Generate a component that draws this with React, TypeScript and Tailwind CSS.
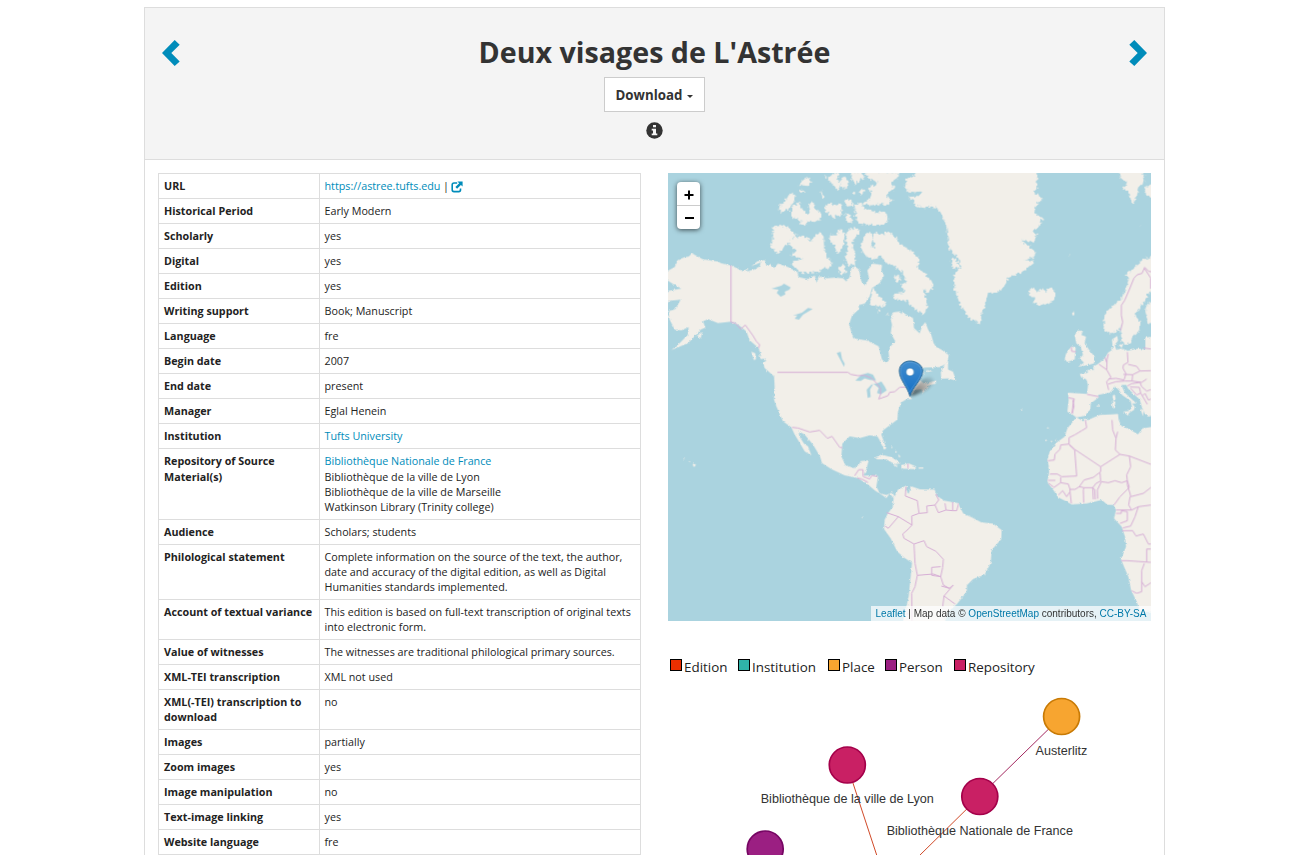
import React from "react";

type Row = { label: React.ReactNode; value: React.ReactNode; size?: string };

function Anchor({ children }: { children: React.ReactNode }) {
  return <a className="text-[#008cba]">{children}</a>;
}

const rows: Row[] = [
  {
    label: "URL",
    value: (
      <span className="flex items-center">
        <Anchor>https://astree.tufts.edu</Anchor>
        <span className="ml-[2.5px]">|</span>
        <svg className="ml-[2.5px] h-[12px] w-[12px]" viewBox="0 0 12 12" fill="none">
          <path d="M6.2 2H3Q1.2 2 1.2 3.8v5Q1.2 10.6 3 10.6h4.8q1.7 0 1.7-1.8V7.4" stroke="#008cba" strokeWidth="1.6" />
          <path d="M6.4 0.4h5.2v5.2L9.9 3.9 6.1 7.7 4.4 6 8.2 2.2z" fill="#008cba" />
        </svg>
      </span>
    ),
  },
  { label: "Historical Period", value: "Early Modern" },
  { label: "Scholarly", value: "yes" },
  { label: "Digital", value: "yes" },
  { label: "Edition", value: "yes" },
  { label: "Writing support", value: "Book; Manuscript" },
  { label: "Language", value: "fre" },
  { label: "Begin date", value: "2007" },
  { label: "End date", value: "present" },
  { label: "Manager", value: "Eglal Henein" },
  { label: "Institution", value: <Anchor>Tufts University</Anchor> },
  {
    label: (
      <>
        <div className="h-[16px]">Repository of Source</div>
        <div>Material(s)</div>
      </>
    ),
    value: (
      <>
        <div className="h-[16px]"><Anchor>Bibliothèque Nationale de France</Anchor></div>
        <div>Bibliothèque de la ville de Lyon</div>
        <div>Bibliothèque de la ville de Marseille</div>
        <div>Watkinson Library (Trinity college)</div>
      </>
    ),
    size: "h-[71px]",
  },
  { label: "Audience", value: "Scholars; students" },
  {
    label: "Philological statement",
    value:
      "Complete information on the source of the text, the author, date and accuracy of the digital edition, as well as Digital Humanities standards implemented.",
    size: "h-[55px]",
  },
  {
    label: "Account of textual variance",
    value: "This edition is based on full-text transcription of original texts into electronic form.",
    size: "h-[40px]",
  },
  { label: "Value of witnesses", value: "The witnesses are traditional philological primary sources." },
  { label: "XML-TEI transcription", value: "XML not used" },
  { label: "XML(-TEI) transcription to download", value: "no", size: "h-[40px]" },
  { label: "Images", value: "partially" },
  { label: "Zoom images", value: "yes" },
  { label: "Image manipulation", value: "no" },
  { label: "Text-image linking", value: "yes" },
  { label: "Website language", value: "fre" },
  { label: "", value: "" },
];

function Header() {
  return (
    <header className="flex h-[152px] items-start justify-between border-b border-[#ddd] bg-[#f4f4f4] px-[17px] pt-[32px]">
      <svg className="h-[26px] w-[18px]" viewBox="0 0 18 26">
        <path d="M12.7 0 17.7 4.7 9.3 13 17.7 21.6 12.7 26 0 13z" fill="#008cba" />
      </svg>
      <div className="-mt-[10px] flex flex-col items-center text-[#333]">
        <h1 className="text-[28.65px] leading-[44px] font-bold">Deux visages de L'Astrée</h1>
        <button className="mt-[3px] flex h-[35px] w-[101px] items-center justify-center gap-[5px] border border-[#ccc] bg-white pt-[2px] text-[13.3px] font-bold">
          Download
          <svg className="mt-[2px] h-[3px] w-[6px]" viewBox="0 0 6 3">
            <path d="M0 0h6L3 3z" fill="#333" />
          </svg>
        </button>
        <svg className="mt-[10px] h-[17px] w-[17px]" viewBox="0 0 17 17">
          <circle cx="8.5" cy="8.5" r="8.2" fill="#333" />
          <path d="M7 3h3v2.3H7zM5.7 6.8H10v4.8h1.3v1.7H5.7v-1.7H7V8.4H5.7z" fill="#f4f4f4" />
        </svg>
      </div>
      <svg className="h-[26px] w-[18px]" viewBox="0 0 18 26">
        <path d="M5.3 0 .3 4.7 8.7 13 .3 21.6 5.3 26 18 13z" fill="#008cba" />
      </svg>
    </header>
  );
}

function DetailTable() {
  return (
    <div className="flex w-[483px] flex-col border-t border-l border-[#ddd] text-[10.75px] leading-[15px] text-[#222]">
      {rows.map((r, i) => (
        <div key={i} className={`flex shrink-0 border-b border-[#ddd] ${r.size ?? "h-[25px]"}`}>
          <div className="w-[161px] border-r border-[#ddd] pt-[5px] pl-[5px] font-bold">{r.label}</div>
          <div className="flex-1 border-r border-[#ddd] pt-[5px] pr-[6px] pl-[4.5px]">{r.value}</div>
        </div>
      ))}
    </div>
  );
}

const mainland =
  "M-8 297 20 282 28 262 50 252 62 251 72 241 88 250 103 258 125 262 150 266 160 271 189 277 225 295 242 285 235 296 258 290 275 280 278 268 250 280 268 265 290 261 296 280 306 272 318 285 330 272 360 282 388 297 392 312 418 318 440 308 446 330 452 310 475 316 500 314 525 316 535 325 545 312 549 288 560 280 573 290 580 325 592 338 603 315 598 292 615 272 642 276 640 292 648 308 635 330 612 345 605 370 590 392 572 396 573 408 552 428 543 455 545 461 556 496 598 503 632 520 638 545 642 560 655 570 664 560 661 530 670 517 682 505 668 480 672 455 668 440 675 418 700 415 714 425 735 435 738 465 755 481 762 460 772 447 780 469 790 486 797 511 805 522 820 530 842 546 838 570 815 582 770 584 748 590 770 600 760 608 756 622 768 632 805 623 803 632 782 638 765 660 760 648 740 652 725 668 732 678 715 679 700 688 690 715 688 740 672 752 645 772 640 785 655 826 648 830 634 800 628 790 605 787 575 795 545 790 523 812 520 850 532 876 558 885 573 875 578 864 602 862 595 890 586 908 612 907 630 909 625 941 635 960 655 966 672 958 680 970 690 950 718 936 714 950 722 958 730 940 756 949 800 950 806 968 828 983 870 990 886 1022 910 1032 940 1048 975 1052 1001 1071 1000 1098 985 1115 971 1131 968 1170 950 1205 915 1218 897 1236 896 1256 868 1292 840 1318 828 1354 703 1354 722 1270 728 1210 732 1169 710 1155 688 1136 668 1096 648 1068 650 1040 660 1020 674 1002 677 975 665 962 655 975 645 968 620 952 600 935 570 915 530 907 490 888 462 870 456 850 435 815 410 785 392 775 394 790 408 812 420 820 430 847 410 835 393 806 380 785 370 763 345 745 325 700 318 680 320 640 318 610 290 585 285 570 295 563 280 550 272 525 245 502 235 475 212 456 190 446 150 450 120 438 105 445 112 464 98 470 88 482 60 510 10 531 35 510 60 485 62 462 40 472 20 470 5 440 0 415 22 408 38 380-8 385-8 355 40 347 18 335-8 318z";

const arcticIslands = [
  "M315 165 335 158 362 168 385 186 367 205 352 222 346 233 330 246 322 238 306 224 315 205z",
  "M358 213 380 194 408 191 430 205 440 192 455 180 467 193 468 225 475 255 495 275 478 290 468 288 450 300 420 302 400 303 385 292 370 275 385 267 405 260 368 250 385 234z",
  "M330 107 352 85 358 70 382 64 378 90 360 112 342 122z",
  "M370 105 393 92 402 110 415 125 428 122 422 97 434 86 443 112 458 120 458 140 440 150 420 148 410 160 393 156 402 146 370 136z",
  "M390 42 405 24 420 16 430 28 420 42 403 40z",
  "M395 57l8-6 4 9-8 6z",
  "M457 55 463 60 470 76 463 74z",
  "M465 5 480 16 500 3 515 5 508 20 520 35 510 57 496 42 488 30z",
  "M516 20 530 13 540 30 537 50 520 47z",
  "M470 105 488 92 496 102 505 96 518 94 522 118 516 138 503 125 498 145 490 130 472 122z",
  "M486 190 505 190 512 174 520 170 530 190 526 215 518 238 507 242 500 220 485 205z",
  "M538 175 558 168 576 172 570 190 553 206 555 225 563 250 560 278 540 280 530 260 540 230 533 205z",
  "M550 0H580L590 18 575 22 562 38 548 15zM590 0H695L690 18 670 32 682 50 662 60 655 75 672 84 660 102 640 95 610 100 585 95 605 82 612 62 600 50 610 38 622 44 628 28 605 22z",
  "M574 55l10-6 8 10-14 8zM552 62l8-4 2 8-8 2z",
  "M560 98 580 92 588 110 620 120 655 120 660 145 650 158 610 158 575 155 562 135z",
  "M528 85 550 82 555 100 538 104z",
  "M530 125 545 128 553 150 540 155z",
  "M590 190 605 178 615 195 608 225 622 228 615 205 618 180 645 188 655 178 682 195 695 215 735 240 755 262 748 285 770 305 790 325 797 342 780 365 765 350 772 375 778 400 768 428 735 408 715 385 690 382 675 378 680 365 710 362 700 338 715 330 702 300 675 280 655 275 640 250 615 262 590 250 578 230z",
  "M678 313 693 308 697 325 682 330z",
  "M615 345 625 365 640 378 655 398 640 405 605 398z",
  "M510 290 525 275 535 300 520 310z",
  "M625 410l12 4-4 7zM655 422l8 3-5 7z",
];

function WorldMap() {
  return (
    <svg className="block h-full w-full" viewBox="0 0 1449 1344" preserveAspectRatio="none">
      <defs>
        <filter id="fjords" filterUnits="userSpaceOnUse" x="-10" y="-10" width="1470" height="1370">
          <feTurbulence type="fractalNoise" baseFrequency="0.13" numOctaves="3" seed="4" result="n" />
          <feDisplacementMap in="SourceGraphic" in2="n" scale="16" xChannelSelector="R" yChannelSelector="G" />
        </filter>
        <filter id="coast" filterUnits="userSpaceOnUse" x="-10" y="-10" width="1470" height="1370">
          <feTurbulence type="fractalNoise" baseFrequency="0.12" numOctaves="2" seed="9" result="n" />
          <feDisplacementMap in="SourceGraphic" in2="n" scale="8" xChannelSelector="R" yChannelSelector="G" />
        </filter>
        <linearGradient id="pin" x1="0" y1="0" x2="0" y2="1">
          <stop offset="0" stopColor="#428dce" />
          <stop offset="1" stopColor="#126fc6" />
        </linearGradient>
        <linearGradient id="shade" x1="0" y1="1" x2="1" y2="0">
          <stop offset="0" stopColor="#000" stopOpacity=".6" />
          <stop offset="1" stopColor="#000" stopOpacity=".05" />
        </linearGradient>
        <filter id="soft" x="-50%" y="-50%" width="200%" height="200%">
          <feGaussianBlur stdDeviation="4" />
        </filter>
      </defs>
      <rect width="1449" height="1344" fill="#aad3df" />
      <g fill="#f2efe9" filter="url(#coast)">
        <path d={mainland} />
        <g transform="translate(720 441)">
          <path d="M735 50 712 52 712 88 690 86 660 92 640 85 625 90 620 75 630 62 628 48 612 58 614 88 600 98 590 115 570 132 555 140 558 150 538 150 540 158 515 162 520 172 535 178 540 195 537 222 480 218 482 240 478 275 495 285 505 292 530 288 547 268 548 250 572 232 570 225 605 218 622 200 632 210 642 225 668 243 672 260 660 280 678 270 680 260 672 250 685 250 650 218 640 195 655 195 660 205 680 225 695 238 702 262 710 280 720 290 735 285z" />
          <path d="M505 292 520 300 540 300 575 285 610 283 630 282 632 300 640 318 665 328 690 343 703 325 735 320V485H418L425 450 418 420 425 395 445 368 470 350 478 325z" />
          <path d="M500 45 510 32 525 33 520 45 534 50 530 70 545 92 560 110 558 130 535 136 510 140 528 128 515 115 525 105 518 80 505 70zM475 97 490 80 503 82 500 118 478 126 470 118z" />
          <path d="M613 228l7-5 3 14-6 5zM612 242l10 3-2 20-7-2zM645 275l20-2-5 14zM564 258l10-3-2 6zM632 75l14-4-5 13zM697 265l10 6-2 18zM98 158 112 128 120 122 120 148 135 155 144 182 120 175 100 176zM55 150l20 4-18 2zM338 268h5v3h-5zM417 322h5v3h-5zM410 360l7-2-2 6zM426 363h7v4zM440 360h5v4z" />
        </g>
        <g transform="translate(0 441)">
          <path d="M620 413 640 404 672 412 698 430 680 432 655 418 628 418zM700 435 722 430 745 440 738 447 700 446zM752 442h14v4h-14zM675 433l16 3-10 4zM76 430l8 4-5 7-5-5zM62 420l6 3-4 3zM46 414l5 2-4 2zM250 95l12 5 2 18-6 2zM270 105l22 8-12 5zM85 48l18-12-5 18zM670 378l4 5-4 2zM682 392l5 4-5 2zM690 402l8 8-5 2z" />
        </g>
        <g transform="translate(456 891)">
          <path d="M685-10 690 15 683 38 700 60 715 82 735 92 755 103 800 100 845 90 862 104 880 105 888 120 882 145 905 170 915 200 918 230 903 268 912 290 925 320 933 360 950 395 960 425 1000 425V-10zM125 141h3v3h-3z" />
        </g>
      </g>
      <g fill="#f2efe9" filter="url(#fjords)">
        <g transform="translate(0 -3)">
          {arcticIslands.map((d, i) => <path key={i} d={d} />)}
        </g>
        <g transform="translate(720 -3)">
          <path d="M30-15 20 10-5 20-10 50 0 58 40 62 32 72 0 76 18 86 25 105 48 108 70 103 88 108 100 125 115 160 118 185 125 235 135 242 150 258 158 285 138 310 140 350 155 395 180 435 205 448 215 458 222 420 232 400 240 362 265 360 290 345 300 318 345 300 380 268 350 264 378 255 383 240 340 205 378 208 388 185 372 180 402 155 395 145 410 140 380 125 380 105 405 80 375 60 385 50 390-15z" />
          <path d="M362 355 375 345 388 362 400 350 412 356 428 346 442 360 443 375 430 390 405 400 375 392 382 376 365 375z" />
          <path d="M630-5 640 20 658 35 645 50 660 58 668 85 677 95 690 60 695 40 710 30 705-5zM709 45l25-10v45l-20-12zM128 258l18 5 8 20-20 5zM482 248l7-3-4 7zM692 159h6v4zM492 420l7 4-5 8z" />
          <path d="M750 248 705 262 685 280 650 310 663 318 655 345 640 380 610 405 590 425 587 455 588 470 603 484 625 480 638 462 640 504 648 516 665 514 675 494 692 476 698 450 680 430 683 425 712 385 718 365 750 355zM750 385 718 395 712 415 718 450 750 465z" />
        </g>
      </g>
      <g fill="#aad3df">
        <path d="M310 347 340 338 348 332 368 343 364 350 350 356 352 364 338 371 326 360 332 350zM375 427 402 419 420 405 434 408 405 425 393 440 380 437 388 427zM506 540l12-4 4 22 8 14-2 10-10-20zM562 623 580 605 600 600 615 605 624 622 606 621 590 616 578 624zM599 675 596 650 610 635 630 630 640 625 650 640 656 652 638 664 627 660 632 645 616 632 606 650 608 672z" />
        <path d="M695 410l5 14 5-10zM720 950l4 3-1 8-5-2z" />
      </g>
      <g fill="none" stroke="#d6aed5" strokeWidth="3" strokeLinejoin="round">
        <path d="M189 277V448L202 450 218 468 232 456 255 488 265 505 275 515 272 525M328 598H540L548 604 570 608 590 607 610 615 625 630 637 645 638 663 632 678 660 668 665 658 680 656 695 643 712 642M372 763 390 765 425 777 455 772 478 796 492 790 515 823 523 824M560 908 572 890H585V910L605 918 612 907 628 910M568 915 582 918 600 928M717 1325 720 1320M720 872 720 886" />
        <g transform="translate(456 891)">
          <path d="M258 50 256 78 292 92 297 130 275 138 276 165 235 140 200 128M235 140 205 175 195 168M276 165 262 180 248 192 252 205 282 222 312 212 320 230 348 244 370 268 368 292 362 320 340 312 292 316 285 280 282 222M285 350 292 316M285 350 275 370 276 452M362 290 335 292 335 316 362 320 370 345 388 355 400 345 372 378 368 410M388 355 364 348M372 378 405 402M348 72 356 90 345 105 320 108 322 128 298 130M345 105 355 128 378 120 375 100M398 96 398 122 410 122 416 100M378 120 398 122" />
        </g>
        <g transform="translate(720 -3)">
          <path d="M735 300 722 298 710 286 702 304 688 308 678 318 665 350 650 385 640 400 640 430 644 450 638 475M710 290 728 318 728 350" />
        </g>
        <g transform="translate(1116 456)">
          <path d="M85 218 103 222 99 238 96 266M141 208 176 215M94 66 95 79 108 80M177 118 200 134M205 87 201 105 200 134 213 157 207 162 200 170 206 195M195 97 200 112M262 81 264 112 250 120 249 130 258 146M264 118 290 124 300 138 333 137M258 146 252 165 228 160 205 162M250 148 278 149 300 138M278 149 276 168 255 168M276 168 305 172 320 162M205 177 228 170 255 168M262 183 275 176 300 172 305 185 320 198 333 194M270 186 298 187 302 204 290 210 272 190M302 204 322 238M308 212 315 205 325 225 333 222M311 69 333 72" />
        </g>
        <g transform="translate(1116 681)">
          <path d="M98 0 102 18 97 40M136 60 140 83 125 92 105 104 87 113V132L62 135 60 148 45 162 43 180 24 182M87 132 104 148 182 200 240 163 226 150 228 115 218 90 216 60M233 95 228 115M87 134 104 150 110 228 65 230 52 222 30 222M182 200V215L160 232 132 240 118 260 105 268 90 268 85 252 62 248 62 232M24 241H46M26 250 42 262 62 248M55 285 68 272 80 290 90 275 94 310M90 268V275M131 308 130 270 132 263H158L160 298M118 260 132 263M166 298 164 268 158 263 168 250 182 243 180 218M173 296 172 270 184 245 205 248 225 242 245 248 262 242 260 225 272 200 268 168 240 163M268 168 333 193M262 242 268 262 240 290 222 315M262 242 262 255 270 280 272 290 310 280 333 262M270 290 266 315 275 330H228M228 340H244V332M244 332 262 335 262 362 240 370M275 330 295 320 333 315M295 320 285 350 272 378 248 384M246 392 278 392 288 408 310 402 325 432H333M244 482H262L333 487M320 485V447H333M313 490 305 512 305 575 290 580 275 572M305 545 315 560 333 548" />
        </g>
      </g>
      <g transform="translate(726 670)">
        <path d="M0 0C8-22 38-66 65-56 84-44 50-12 0 0z" fill="url(#shade)" filter="url(#soft)" />
        <path d="M0 0C-7-28-32-50-32-76C-32-94-18-106 0-106S38-94 38-76C38-50 8-30 0 0z" fill="url(#pin)" stroke="#2e6c97" strokeWidth="3" />
        <path d="M-1-12C-8-34-28-54-28-76C-28-92-16-102 0-102S34-92 34-76C34-54 9-34-1-12z" fill="none" stroke="#7db2e0" strokeOpacity=".55" strokeWidth="2" />
        <circle cx="0" cy="-73" r="11.5" fill="#fff" stroke="#2e6c97" strokeWidth="1" />
      </g>
    </svg>
  );
}

function MapPanel() {
  return (
    <div className="relative h-[448px] w-[483px] overflow-hidden bg-[#aad3df]">
      <WorldMap />
      <div className="absolute top-[9px] left-[9px] flex h-[47px] w-[23px] flex-col rounded-[4px] bg-white shadow-[0_1px_5px_rgba(0,0,0,0.65)]">
        <div className="flex h-[24px] items-center justify-center border-b border-[#ccc] pt-[2px] pl-[1px]">
          <svg className="h-[10px] w-[10px]" viewBox="0 0 10 10"><path d="M0.5 5h9M5 0.5v9" stroke="#000" strokeWidth="2" /></svg>
        </div>
        <div className="flex flex-1 items-center justify-center pl-[2px]">
          <svg className="h-[2px] w-[9px]" viewBox="0 0 9 2"><path d="M0 1h9" stroke="#000" strokeWidth="2" /></svg>
        </div>
      </div>
      <div className="absolute right-0 bottom-0 flex h-[15px] w-[280px] items-center justify-center bg-white/70 font-['Liberation_Sans',sans-serif] text-[10px] whitespace-pre text-[#333]">
        <span className="text-[#0078a8]">Leaflet</span> | Map data © <span className="text-[#0078a8]">OpenStreetMap</span> contributors, <span className="text-[#0078a8]">CC-BY-SA</span>
      </div>
    </div>
  );
}

const legend = [
  { name: "Edition", swatch: "bg-[#eb2f00]", box: "w-[68px]" },
  { name: "Institution", swatch: "bg-[#2fb3a8]", box: "w-[90px]" },
  { name: "Place", swatch: "bg-[#f7a530]", box: "w-[57px]" },
  { name: "Person", swatch: "bg-[#9b1f82]", box: "w-[69px]" },
  { name: "Repository", swatch: "bg-[#c92064]", box: "w-[90px]" },
];

function Graph() {
  return (
    <div className="font-['Liberation_Sans',sans-serif]">
      <svg className="block h-[175px] w-[483px]" viewBox="668 680 483 175">
        <path d="M1062 716 980 796" stroke="#a3285f" strokeWidth="1" />
        <path d="M980 796 919 856M847 765 877 856" stroke="#d04a28" strokeWidth="1" />
        <g strokeWidth="1.7">
          <circle cx="1061.6" cy="716.5" r="18" fill="#f7a530" stroke="#c87a05" />
          <circle cx="847.3" cy="765" r="18" fill="#c92064" stroke="#a4004a" />
          <circle cx="979.8" cy="796.5" r="18" fill="#c92064" stroke="#a4004a" />
          <circle cx="765.2" cy="849" r="18" fill="#9b1f82" stroke="#760563" />
        </g>
        <g fill="#333" fontSize="12.6" textAnchor="middle">
          <text x="1061.5" y="755">Austerlitz</text>
          <text x="847.3" y="803">Bibliothèque de la ville de Lyon</text>
          <text x="979.8" y="835">Bibliothèque Nationale de France</text>
        </g>
      </svg>
    </div>
  );
}

export default function App() {
  return (
    <div className="h-[855px] overflow-hidden bg-white pt-[7px] pl-[144px] font-['Open_Sans',sans-serif]">
      <main className="h-[900px] w-[1021px] border border-[#ddd]">
        <Header />
        <div className="flex gap-[27px] pt-[13px] pl-[13px]">
          <DetailTable />
          <div className="flex w-[483px] flex-col">
            <MapPanel />
            <div className="mt-[36px] flex h-[23px] pl-[2px] text-[13.4px] leading-[20px] text-[#222]">
              {legend.map((l) => (
                <div key={l.name} className={`flex items-start gap-[2px] ${l.box}`}>
                  <span className={`mt-[2px] h-[12px] w-[12px] shrink-0 border border-black ${l.swatch}`} />
                  <span>{l.name}</span>
                </div>
              ))}
            </div>
            <Graph />
          </div>
        </div>
      </main>
    </div>
  );
}
